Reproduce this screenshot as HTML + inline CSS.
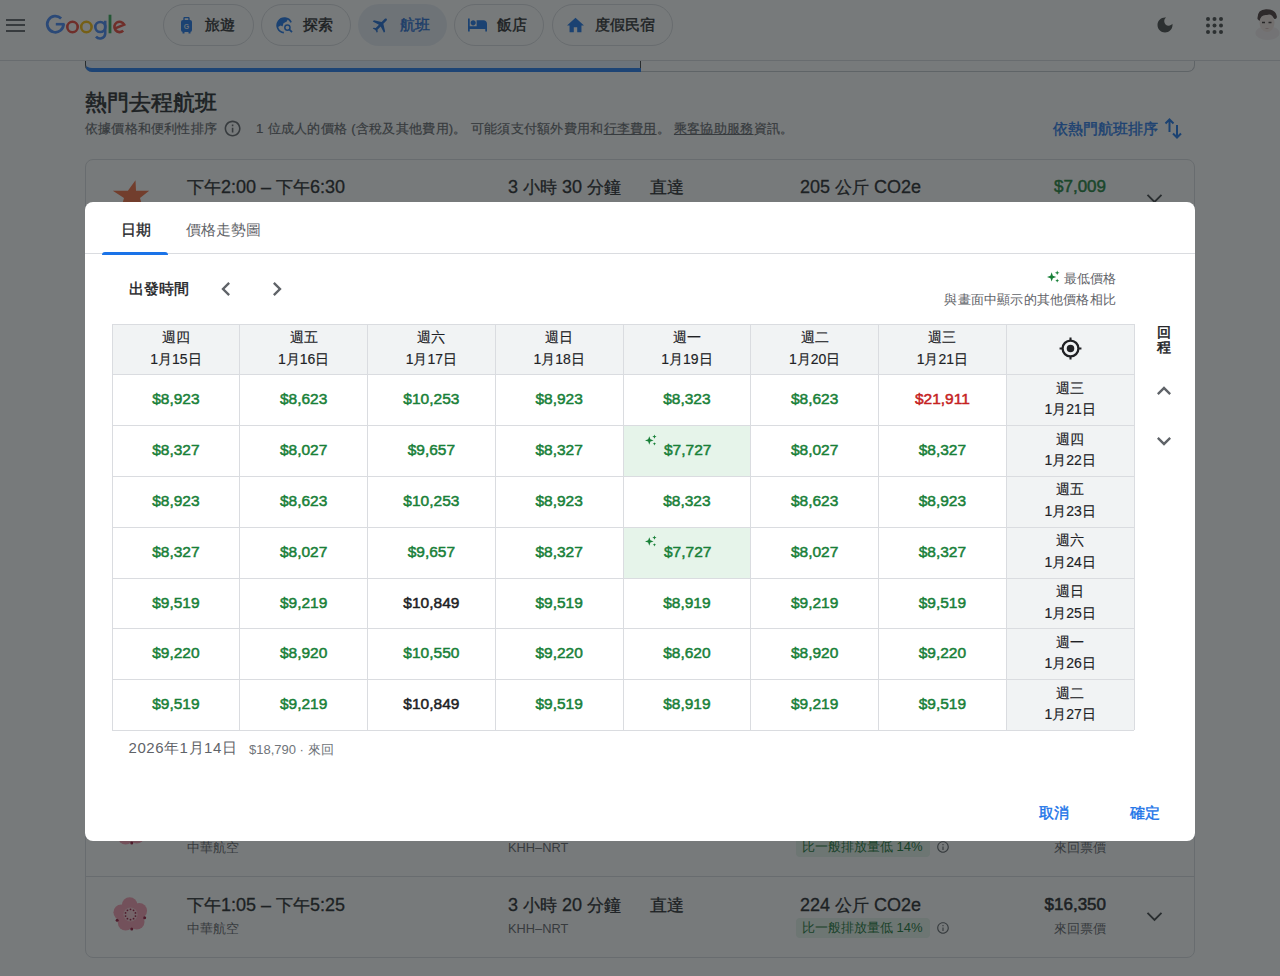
<!DOCTYPE html><html><head><meta charset="utf-8"><style>
*{box-sizing:border-box;margin:0;padding:0}
html,body{width:1280px;height:976px;overflow:hidden;background:#fff}
body{font-family:"Liberation Sans",sans-serif;color:#202124;position:relative}
.a{position:absolute;white-space:nowrap}
svg{display:block}
.m3{-webkit-text-stroke:0.3px currentColor}
.m4{-webkit-text-stroke:0.4px currentColor}
.m5{-webkit-text-stroke:0.5px currentColor}
.m6{-webkit-text-stroke:0.6px currentColor}
.r{text-align:right}
.c{text-align:center}
</style></head><body><div class="a" style="left:85px;top:30px;width:1110px;height:42px;border:1px solid #c4c7cc;border-top:none;border-radius:0 0 7px 7px;background:#fff"></div>
<div class="a" style="left:85px;top:30px;width:556px;height:42px;border-radius:0 0 0 7px;background:#e6f0ff;border-bottom:4px solid #1f78f0;border-left:1px solid #3c4043"></div>
<div class="a" style="left:640px;top:30px;width:1px;height:38px;background:#3c4043"></div>
<div class="a" style="left:0;top:0;width:1280px;height:61px;background:#fff;border-bottom:1px solid #dadce0"></div>
<div class="a" style="left:6px;top:18.5px;width:19px;height:2px;background:#5f6368"></div>
<div class="a" style="left:6px;top:24px;width:19px;height:2px;background:#5f6368"></div>
<div class="a" style="left:6px;top:29.5px;width:19px;height:2px;background:#5f6368"></div>
<div class="a" style="left:0;top:0"><svg width="140" height="45" viewBox="0 0 140 45" fill="none"><path d="M61.1 18.4 A8.1 8.1 0 1 0 63.5 24" stroke="#4285f4" stroke-width="2.8"/><path d="M55.8 24.2 H64.6" stroke="#4285f4" stroke-width="2.6"/><circle cx="72.5" cy="27" r="5.2" stroke="#ea4335" stroke-width="2.6"/><circle cx="86.4" cy="27" r="5.2" stroke="#fbbc04" stroke-width="2.6"/><circle cx="100.3" cy="27" r="5" stroke="#4285f4" stroke-width="2.6"/><path d="M105.2 20.7 V33.8 A5.2 5.2 0 0 1 96 36.6" stroke="#4285f4" stroke-width="2.6"/><path d="M110 14.7 V33.3" stroke="#34a853" stroke-width="2.8"/><path d="M114.6 28.6 L124.2 24.6 A5.2 5.2 0 1 0 123.2 30.6" stroke="#ea4335" stroke-width="2.6"/></svg></div>
<div class="a" style="left:163px;top:4px;width:91px;height:42px;border-radius:21px;border:1px solid #dadce0"></div>
<div class="a" style="left:181px;top:16.5px"><svg width="11" height="17" viewBox="0 0 11 17"><rect x="3" y="0.6" width="5" height="3" rx="0.8" fill="none" stroke="#1a73e8" stroke-width="1.4"/><rect x="0" y="3" width="11" height="12" rx="2" fill="#1a73e8"/><rect x="1.5" y="14.5" width="2" height="2" fill="#1a73e8"/><rect x="7.5" y="14.5" width="2" height="2" fill="#1a73e8"/><text x="5.5" y="12" font-size="7" font-weight="bold" text-anchor="middle" fill="#dfe8f8" font-family="Liberation Sans">G</text></svg></div>
<div class="a m4" style="left:205px;top:16px;font-size:15px;line-height:18px;color:#202124">旅遊</div>
<div class="a" style="left:261px;top:4px;width:90px;height:42px;border-radius:21px;border:1px solid #dadce0"></div>
<div class="a" style="left:276px;top:16.5px"><svg width="17" height="17" viewBox="0 0 17 17" fill="none"><path d="M15.1 5.3 A7.3 7.3 0 1 0 7.86 15.67" stroke="#1a73e8" stroke-width="1.7"/><path fill="#1a73e8" d="M1.5 7 Q3 2 8.5 1.1 L12 1.8 L10.8 4.5 L7.5 6.3 L6.5 9.5 L4.8 8.5 L2 10Z"/><circle cx="11.4" cy="10.6" r="2.6" stroke="#1a73e8" stroke-width="1.5"/><path d="M13.2 12.4 L16 15.2" stroke="#1a73e8" stroke-width="1.8"/></svg></div>
<div class="a m4" style="left:303px;top:16px;font-size:15px;line-height:18px;color:#202124">探索</div>
<div class="a" style="left:358px;top:4px;width:89px;height:42px;border-radius:21px;background:#e9eef6"></div>
<div class="a" style="left:371px;top:15px"><svg width="20" height="20" viewBox="0 0 24 24"><g transform="rotate(45 12 12)"><path fill="#1967d2" d="M21 16v-2l-8-5V3.5c0-.83-.67-1.5-1.5-1.5S10 2.67 10 3.5V9l-8 5v2l8-2.5V19l-2 1.5V22l3.5-1 3.5 1v-1.5L13 19v-5.5l8 2.5z"/></g></svg></div>
<div class="a m4" style="left:400px;top:16px;font-size:15px;line-height:18px;color:#1967d2">航班</div>
<div class="a" style="left:454px;top:4px;width:90px;height:42px;border-radius:21px;border:1px solid #dadce0"></div>
<div class="a" style="left:468px;top:18px"><svg width="19" height="14" viewBox="1 5 22 15"><path fill="#1a73e8" d="M7 13c1.66 0 3-1.34 3-3S8.66 7 7 7s-3 1.34-3 3 1.34 3 3 3zm12-6h-8v7H3V5H1v15h2v-3h18v3h2v-9c0-2.21-1.79-4-4-4z"/></svg></div>
<div class="a m4" style="left:497px;top:16px;font-size:15px;line-height:18px;color:#202124">飯店</div>
<div class="a" style="left:552px;top:4px;width:121px;height:42px;border-radius:21px;border:1px solid #dadce0"></div>
<div class="a" style="left:567px;top:17px"><svg width="17" height="16" viewBox="2 3 20 17"><path fill="#1a73e8" d="M10 20v-6h4v6h5v-8h3L12 3 2 12h3v8z"/></svg></div>
<div class="a m4" style="left:595px;top:16px;font-size:15px;line-height:18px;color:#202124">度假民宿</div>
<div class="a" style="left:1155px;top:15px"><svg width="20" height="20" viewBox="0 0 24 24"><path fill="#444746" d="M12 3c-4.97 0-9 4.03-9 9s4.03 9 9 9 9-4.03 9-9c0-.46-.04-.92-.1-1.36-.98 1.37-2.58 2.26-4.4 2.26-2.98 0-5.4-2.42-5.4-5.4 0-1.81.89-3.42 2.26-4.4-.44-.06-.9-.1-1.36-.1z"/></svg></div>
<div class="a" style="left:1206px;top:16.5px"><svg width="18" height="18" viewBox="0 0 18 18"><circle cx="2.0" cy="2.0" r="2" fill="#444746"/><circle cx="2.0" cy="8.5" r="2" fill="#444746"/><circle cx="2.0" cy="15.0" r="2" fill="#444746"/><circle cx="8.5" cy="2.0" r="2" fill="#444746"/><circle cx="8.5" cy="8.5" r="2" fill="#444746"/><circle cx="8.5" cy="15.0" r="2" fill="#444746"/><circle cx="15.0" cy="2.0" r="2" fill="#444746"/><circle cx="15.0" cy="8.5" r="2" fill="#444746"/><circle cx="15.0" cy="15.0" r="2" fill="#444746"/></svg></div>
<div class="a" style="left:1245px;top:0"><svg width="35" height="50" viewBox="0 0 35 50"><ellipse cx="22.5" cy="33" rx="12" ry="7" fill="#f4eef0"/><ellipse cx="22" cy="23" rx="7.5" ry="9" fill="#f3e3de"/><path d="M12.5 19 Q12 9.5 21 9.2 Q31 9 32 17 Q31 20 29 18.5 Q26 13 22 15 Q16 14 14.5 21Z" fill="#4a3838"/><path d="M17 22.5 h3 M23.5 22.5 h3" stroke="#3a3030" stroke-width="1.3"/><path d="M20.5 28.5 h3" stroke="#c9a8a8" stroke-width="0.8"/></svg></div>
<div class="a m6" style="left:85px;top:90px;font-size:21.6px;line-height:26px;color:#202124">熱門去程航班</div>
<div class="a" style="left:85px;top:121px;font-size:13px;line-height:16px;color:#5f6368;letter-spacing:0.2px;-webkit-text-stroke:0.2px #5f6368">依據價格和便利性排序</div>
<div class="a" style="left:223.2px;top:119.4px"><svg width="19.2" height="19.2" viewBox="0 0 24 24" fill="#5f6368"><path d="M11 7h2v2h-2zm0 4h2v6h-2zm1-9C6.48 2 2 6.48 2 12s4.48 10 10 10 10-4.48 10-10S17.52 2 12 2zm0 18c-4.41 0-8-3.59-8-8s3.59-8 8-8 8 3.59 8 8-3.59 8-8 8z"/></svg></div>
<div class="a" style="left:256px;top:121px;font-size:13.2px;line-height:16px;color:#5f6368;letter-spacing:0.28px;-webkit-text-stroke:0.2px #5f6368">1 位成人的價格 (含稅及其他費用)。 可能須支付額外費用和<u>行李費用</u>。 <u>乘客協助服務</u>資訊。</div>
<div class="a m4" style="left:1053px;top:119.5px;font-size:15px;line-height:18px;color:#1a73e8">依熱門航班排序</div>
<div class="a" style="left:1164px;top:117px"><svg width="19" height="23" viewBox="0 0 19 23" fill="none" stroke="#1a73e8" stroke-width="2"><path d="M5.5 15 V2.5 M1.5 6.5 L5.5 2.5 L9.5 6.5"/><path d="M13 8 V20.5 M9 16.5 L13 20.5 L17 16.5"/></svg></div>
<div class="a" style="left:85px;top:159px;width:1110px;height:799px;border:1px solid #dadce0;border-radius:8px;background:#fff"></div>
<div class="a" style="left:86px;top:876px;width:1108px;height:1px;background:#dadce0"></div>
<div class="a" style="left:86px;top:795px;width:1108px;height:1px;background:#dadce0"></div>
<div class="a" style="left:111px;top:178px"><svg width="40" height="40" viewBox="0 0 40 40"><path fill="#f26a3c" d="M24.5 2.3 L25 12.7 L38.2 12.7 L29 20 L33 34 L21 26 L9 34 L13 20 L1.8 12.7 L16.9 12.7Z"/></svg></div>
<div class="a m3" style="left:187px;top:176.8px;font-size:18px;line-height:20px;color:#202124"><span style="font-size:17px">下午</span>2:00 – <span style="font-size:17px">下午</span>6:30</div>
<div class="a m3" style="left:508px;top:176.8px;font-size:18px;line-height:20px;color:#202124">3 <span style="font-size:17px">小時</span> 30 <span style="font-size:17px">分鐘</span></div>
<div class="a m3" style="left:650px;top:176.8px;font-size:18px;line-height:20px;color:#202124"><span style="font-size:17px">直達</span></div>
<div class="a m3" style="left:800px;top:176.8px;font-size:18px;line-height:20px;color:#202124">205 <span style="font-size:17px">公斤</span> CO2e</div>
<div class="a r" style="left:1000px;width:106px;top:177px;font-size:17px;line-height:20px;-webkit-text-stroke:0.5px #188038;color:#188038">$7,009</div>
<div class="a" style="left:1146px;top:193px"><svg width="17" height="11" viewBox="0 0 17 11" fill="none" stroke="#3c4043" stroke-width="1.9"><path d="M1.5 1.8 L8.5 8.8 L15.5 1.8"/></svg></div>
<div class="a" style="left:111px;top:811px"><svg width="40" height="36" viewBox="0 0 40 36"><g fill="#f59aae"><circle cx="18.67" cy="8.04" r="7.8"/><circle cx="28.24" cy="13.79" r="7.8"/><circle cx="25.73" cy="24.67" r="7.8"/><circle cx="14.61" cy="25.64" r="7.8"/><circle cx="10.24" cy="15.36" r="7.8"/></g><circle cx="19.5" cy="17.5" r="7" fill="#fbc8d2"/><circle cx="19.50" cy="12.30" r="0.9" fill="#9a1238"/><circle cx="22.56" cy="13.29" r="0.9" fill="#9a1238"/><circle cx="24.45" cy="15.89" r="0.9" fill="#9a1238"/><circle cx="24.45" cy="19.11" r="0.9" fill="#9a1238"/><circle cx="22.56" cy="21.71" r="0.9" fill="#9a1238"/><circle cx="19.50" cy="22.70" r="0.9" fill="#9a1238"/><circle cx="16.44" cy="21.71" r="0.9" fill="#9a1238"/><circle cx="14.55" cy="19.11" r="0.9" fill="#9a1238"/><circle cx="14.55" cy="15.89" r="0.9" fill="#9a1238"/><circle cx="16.44" cy="13.29" r="0.9" fill="#9a1238"/><circle cx="33.63" cy="20.76" r="1.5" fill="#9a1238"/><circle cx="20.76" cy="31.94" r="1.5" fill="#9a1238"/><circle cx="6.15" cy="23.17" r="1.5" fill="#9a1238"/></svg></div>
<div class="a" style="left:187px;top:839.5px;font-size:12.8px;line-height:16px;color:#5f6368">中華航空</div>
<div class="a" style="left:508px;top:839.5px;font-size:12.8px;line-height:16px;color:#5f6368">KHH–NRT</div>
<div class="a" style="left:796px;top:837px;width:134px;height:20px;border-radius:4px;background:#e6f4ea"></div>
<div class="a" style="left:802px;top:839px;font-size:13px;line-height:16px;color:#137333">比一般排放量低 14%</div>
<div class="a" style="left:936px;top:840px"><svg width="14" height="14" viewBox="0 0 24 24" fill="#5f6368"><path d="M11 7h2v2h-2zm0 4h2v6h-2zm1-9C6.48 2 2 6.48 2 12s4.48 10 10 10 10-4.48 10-10S17.52 2 12 2zm0 18c-4.41 0-8-3.59-8-8s3.59-8 8-8 8 3.59 8 8-3.59 8-8 8z"/></svg></div>
<div class="a r" style="left:1000px;width:106px;top:839.5px;font-size:12.8px;line-height:16px;color:#5f6368">來回票價</div>
<div class="a" style="left:111px;top:897px"><svg width="40" height="36" viewBox="0 0 40 36"><g fill="#f59aae"><circle cx="18.67" cy="8.04" r="7.8"/><circle cx="28.24" cy="13.79" r="7.8"/><circle cx="25.73" cy="24.67" r="7.8"/><circle cx="14.61" cy="25.64" r="7.8"/><circle cx="10.24" cy="15.36" r="7.8"/></g><circle cx="19.5" cy="17.5" r="7" fill="#fbc8d2"/><circle cx="19.50" cy="12.30" r="0.9" fill="#9a1238"/><circle cx="22.56" cy="13.29" r="0.9" fill="#9a1238"/><circle cx="24.45" cy="15.89" r="0.9" fill="#9a1238"/><circle cx="24.45" cy="19.11" r="0.9" fill="#9a1238"/><circle cx="22.56" cy="21.71" r="0.9" fill="#9a1238"/><circle cx="19.50" cy="22.70" r="0.9" fill="#9a1238"/><circle cx="16.44" cy="21.71" r="0.9" fill="#9a1238"/><circle cx="14.55" cy="19.11" r="0.9" fill="#9a1238"/><circle cx="14.55" cy="15.89" r="0.9" fill="#9a1238"/><circle cx="16.44" cy="13.29" r="0.9" fill="#9a1238"/><circle cx="33.63" cy="20.76" r="1.5" fill="#9a1238"/><circle cx="20.76" cy="31.94" r="1.5" fill="#9a1238"/><circle cx="6.15" cy="23.17" r="1.5" fill="#9a1238"/></svg></div>
<div class="a m3" style="left:187px;top:894.8px;font-size:18px;line-height:20px;color:#202124"><span style="font-size:17px">下午</span>1:05 – <span style="font-size:17px">下午</span>5:25</div>
<div class="a" style="left:187px;top:920.5px;font-size:12.8px;line-height:16px;color:#5f6368">中華航空</div>
<div class="a m3" style="left:508px;top:894.8px;font-size:18px;line-height:20px;color:#202124">3 <span style="font-size:17px">小時</span> 20 <span style="font-size:17px">分鐘</span></div>
<div class="a" style="left:508px;top:920.5px;font-size:12.8px;line-height:16px;color:#5f6368">KHH–NRT</div>
<div class="a m3" style="left:650px;top:894.8px;font-size:18px;line-height:20px;color:#202124"><span style="font-size:17px">直達</span></div>
<div class="a m3" style="left:800px;top:894.8px;font-size:18px;line-height:20px;color:#202124">224 <span style="font-size:17px">公斤</span> CO2e</div>
<div class="a" style="left:796px;top:918px;width:134px;height:20px;border-radius:4px;background:#e6f4ea"></div>
<div class="a" style="left:802px;top:920px;font-size:13px;line-height:16px;color:#137333">比一般排放量低 14%</div>
<div class="a" style="left:936px;top:921px"><svg width="14" height="14" viewBox="0 0 24 24" fill="#5f6368"><path d="M11 7h2v2h-2zm0 4h2v6h-2zm1-9C6.48 2 2 6.48 2 12s4.48 10 10 10 10-4.48 10-10S17.52 2 12 2zm0 18c-4.41 0-8-3.59-8-8s3.59-8 8-8 8 3.59 8 8-3.59 8-8 8z"/></svg></div>
<div class="a r" style="left:1000px;width:106px;top:895px;font-size:17px;line-height:20px;-webkit-text-stroke:0.55px #202124;color:#202124">$16,350</div>
<div class="a r" style="left:1000px;width:106px;top:920.5px;font-size:12.8px;line-height:16px;color:#5f6368">來回票價</div>
<div class="a" style="left:1146px;top:911px"><svg width="17" height="11" viewBox="0 0 17 11" fill="none" stroke="#3c4043" stroke-width="1.9"><path d="M1.5 1.8 L8.5 8.8 L15.5 1.8"/></svg></div>
<div class="a" style="left:0;top:0;width:1280px;height:976px;background:rgba(28,33,35,0.6)"></div>
<div class="a" style="left:85px;top:202px;width:1110px;height:639px;background:#fff;border-radius:8px;overflow:hidden"><div class="a m3" style="left:36px;top:18.5px;font-size:15px;line-height:18px;color:#202124">日期</div><div class="a" style="left:101px;top:18.5px;font-size:15px;line-height:18px;color:#5f6368">價格走勢圖</div><div class="a" style="left:0;top:51px;width:1110px;height:1px;background:#dadce0"></div><div class="a" style="left:17px;top:50px;width:66px;height:3px;border-radius:3px 3px 0 0;background:#1a73e8"></div><div class="a m4" style="left:44px;top:78px;font-size:15px;line-height:18px;color:#202124">出發時間</div><div class="a" style="left:126.5px;top:72.5px"><svg width="28" height="28" viewBox="0 0 24 24"><path fill="#5f6368" d="M15.41 7.41L14 6l-6 6 6 6 1.41-1.41L10.83 12z"/></svg></div><div class="a" style="left:178px;top:72.5px"><svg width="28" height="28" viewBox="0 0 24 24"><path fill="#5f6368" d="M10 6L8.59 7.41 13.17 12l-4.58 4.59L10 18l6-6z"/></svg></div><div class="a" style="left:962px;top:68px"><svg width="13" height="13" viewBox="0 0 14 14"><path fill="#188038" d="M5 2.5 L6.3 6.2 L10 7.5 L6.3 8.8 L5 12.5 L3.7 8.8 L0 7.5 L3.7 6.2Z M11 0.5 L11.7 2.3 L13.5 3 L11.7 3.7 L11 5.5 L10.3 3.7 L8.5 3 L10.3 2.3Z M11 9.5 L11.6 10.9 L13 11.5 L11.6 12.1 L11 13.5 L10.4 12.1 L9 11.5 L10.4 10.9Z"/></svg></div><div class="a r" style="left:831px;width:200px;top:68.5px;font-size:13.2px;line-height:16px;color:#5f6368">最低價格</div><div class="a r" style="left:731px;width:300px;top:89.5px;font-size:13.4px;line-height:16px;color:#5f6368;letter-spacing:0.2px">與畫面中顯示的其他價格相比</div><div class="a" style="left:27.0px;top:122.0px;width:1022.0px;height:50.8px;background:#f1f3f4"></div><div class="a" style="left:921.25px;top:122.0px;width:127.75px;height:406.4px;background:#f1f3f4"></div><div class="a" style="left:538.0px;top:223.6px;width:127.75px;height:50.8px;background:#e6f4ea"></div><div class="a" style="left:538.0px;top:325.2px;width:127.75px;height:50.8px;background:#e6f4ea"></div><div class="a" style="left:26.5px;top:122.0px;width:1px;height:406.4px;background:#dadce0"></div><div class="a" style="left:154.25px;top:122.0px;width:1px;height:406.4px;background:#dadce0"></div><div class="a" style="left:282.0px;top:122.0px;width:1px;height:406.4px;background:#dadce0"></div><div class="a" style="left:409.75px;top:122.0px;width:1px;height:406.4px;background:#dadce0"></div><div class="a" style="left:537.5px;top:122.0px;width:1px;height:406.4px;background:#dadce0"></div><div class="a" style="left:665.25px;top:122.0px;width:1px;height:406.4px;background:#dadce0"></div><div class="a" style="left:793.0px;top:122.0px;width:1px;height:406.4px;background:#dadce0"></div><div class="a" style="left:920.75px;top:122.0px;width:1px;height:406.4px;background:#dadce0"></div><div class="a" style="left:1048.5px;top:122.0px;width:1px;height:406.4px;background:#dadce0"></div><div class="a" style="left:27.0px;top:121.5px;width:1022.0px;height:1px;background:#dadce0"></div><div class="a" style="left:27.0px;top:172.3px;width:1022.0px;height:1px;background:#dadce0"></div><div class="a" style="left:27.0px;top:223.1px;width:1022.0px;height:1px;background:#dadce0"></div><div class="a" style="left:27.0px;top:273.9px;width:1022.0px;height:1px;background:#dadce0"></div><div class="a" style="left:27.0px;top:324.7px;width:1022.0px;height:1px;background:#dadce0"></div><div class="a" style="left:27.0px;top:375.5px;width:1022.0px;height:1px;background:#dadce0"></div><div class="a" style="left:27.0px;top:426.29999999999995px;width:1022.0px;height:1px;background:#dadce0"></div><div class="a" style="left:27.0px;top:477.09999999999997px;width:1022.0px;height:1px;background:#dadce0"></div><div class="a" style="left:27.0px;top:527.9px;width:1022.0px;height:1px;background:#dadce0"></div><div class="a c" style="left:27.0px;top:125.0px;width:127.75px;font-size:14px;line-height:21.5px;color:#202124;-webkit-text-stroke:0.15px #202124">週四<br>1月15日</div><div class="a c" style="left:154.75px;top:125.0px;width:127.75px;font-size:14px;line-height:21.5px;color:#202124;-webkit-text-stroke:0.15px #202124">週五<br>1月16日</div><div class="a c" style="left:282.5px;top:125.0px;width:127.75px;font-size:14px;line-height:21.5px;color:#202124;-webkit-text-stroke:0.15px #202124">週六<br>1月17日</div><div class="a c" style="left:410.25px;top:125.0px;width:127.75px;font-size:14px;line-height:21.5px;color:#202124;-webkit-text-stroke:0.15px #202124">週日<br>1月18日</div><div class="a c" style="left:538.0px;top:125.0px;width:127.75px;font-size:14px;line-height:21.5px;color:#202124;-webkit-text-stroke:0.15px #202124">週一<br>1月19日</div><div class="a c" style="left:665.75px;top:125.0px;width:127.75px;font-size:14px;line-height:21.5px;color:#202124;-webkit-text-stroke:0.15px #202124">週二<br>1月20日</div><div class="a c" style="left:793.5px;top:125.0px;width:127.75px;font-size:14px;line-height:21.5px;color:#202124;-webkit-text-stroke:0.15px #202124">週三<br>1月21日</div><div class="a" style="left:972.625px;top:134.4px"><svg width="25" height="25" viewBox="0 0 24 24" fill="none" stroke="#202124"><circle cx="12" cy="12" r="7.6" stroke-width="2.2"/><circle cx="12" cy="12" r="3.6" fill="#202124" stroke="none"/><path d="M12 1.5V4.5M12 19.5V22.5M1.5 12H4.5M19.5 12H22.5" stroke-width="2"/></svg></div><div class="a c" style="left:921.25px;top:175.8px;width:127.75px;font-size:14px;line-height:21.5px;color:#202124;-webkit-text-stroke:0.15px #202124">週三<br>1月21日</div><div class="a c" style="left:921.25px;top:226.6px;width:127.75px;font-size:14px;line-height:21.5px;color:#202124;-webkit-text-stroke:0.15px #202124">週四<br>1月22日</div><div class="a c" style="left:921.25px;top:277.4px;width:127.75px;font-size:14px;line-height:21.5px;color:#202124;-webkit-text-stroke:0.15px #202124">週五<br>1月23日</div><div class="a c" style="left:921.25px;top:328.2px;width:127.75px;font-size:14px;line-height:21.5px;color:#202124;-webkit-text-stroke:0.15px #202124">週六<br>1月24日</div><div class="a c" style="left:921.25px;top:379.0px;width:127.75px;font-size:14px;line-height:21.5px;color:#202124;-webkit-text-stroke:0.15px #202124">週日<br>1月25日</div><div class="a c" style="left:921.25px;top:429.79999999999995px;width:127.75px;font-size:14px;line-height:21.5px;color:#202124;-webkit-text-stroke:0.15px #202124">週一<br>1月26日</div><div class="a c" style="left:921.25px;top:480.59999999999997px;width:127.75px;font-size:14px;line-height:21.5px;color:#202124;-webkit-text-stroke:0.15px #202124">週二<br>1月27日</div><div class="a c" style="left:27.0px;top:188.3px;width:127.75px;font-size:15.5px;line-height:18px;-webkit-text-stroke:0.5px #188038;color:#188038">$8,923</div><div class="a c" style="left:154.75px;top:188.3px;width:127.75px;font-size:15.5px;line-height:18px;-webkit-text-stroke:0.5px #188038;color:#188038">$8,623</div><div class="a c" style="left:282.5px;top:188.3px;width:127.75px;font-size:15.5px;line-height:18px;-webkit-text-stroke:0.5px #188038;color:#188038">$10,253</div><div class="a c" style="left:410.25px;top:188.3px;width:127.75px;font-size:15.5px;line-height:18px;-webkit-text-stroke:0.5px #188038;color:#188038">$8,923</div><div class="a c" style="left:538.0px;top:188.3px;width:127.75px;font-size:15.5px;line-height:18px;-webkit-text-stroke:0.5px #188038;color:#188038">$8,323</div><div class="a c" style="left:665.75px;top:188.3px;width:127.75px;font-size:15.5px;line-height:18px;-webkit-text-stroke:0.5px #188038;color:#188038">$8,623</div><div class="a c" style="left:793.5px;top:188.3px;width:127.75px;font-size:15.5px;line-height:18px;-webkit-text-stroke:0.5px #c5221f;color:#c5221f">$21,911</div><div class="a c" style="left:27.0px;top:239.1px;width:127.75px;font-size:15.5px;line-height:18px;-webkit-text-stroke:0.5px #188038;color:#188038">$8,327</div><div class="a c" style="left:154.75px;top:239.1px;width:127.75px;font-size:15.5px;line-height:18px;-webkit-text-stroke:0.5px #188038;color:#188038">$8,027</div><div class="a c" style="left:282.5px;top:239.1px;width:127.75px;font-size:15.5px;line-height:18px;-webkit-text-stroke:0.5px #188038;color:#188038">$9,657</div><div class="a c" style="left:410.25px;top:239.1px;width:127.75px;font-size:15.5px;line-height:18px;-webkit-text-stroke:0.5px #188038;color:#188038">$8,327</div><div class="a" style="left:560.0px;top:231.6px"><svg width="12" height="12" viewBox="0 0 14 14"><path fill="#188038" d="M5 2.5 L6.3 6.2 L10 7.5 L6.3 8.8 L5 12.5 L3.7 8.8 L0 7.5 L3.7 6.2Z M11 0.5 L11.7 2.3 L13.5 3 L11.7 3.7 L11 5.5 L10.3 3.7 L8.5 3 L10.3 2.3Z M11 9.5 L11.6 10.9 L13 11.5 L11.6 12.1 L11 13.5 L10.4 12.1 L9 11.5 L10.4 10.9Z"/></svg></div><div class="a" style="left:579.0px;top:239.1px;font-size:15.5px;line-height:18px;-webkit-text-stroke:0.5px #188038;color:#188038">$7,727</div><div class="a c" style="left:665.75px;top:239.1px;width:127.75px;font-size:15.5px;line-height:18px;-webkit-text-stroke:0.5px #188038;color:#188038">$8,027</div><div class="a c" style="left:793.5px;top:239.1px;width:127.75px;font-size:15.5px;line-height:18px;-webkit-text-stroke:0.5px #188038;color:#188038">$8,327</div><div class="a c" style="left:27.0px;top:289.9px;width:127.75px;font-size:15.5px;line-height:18px;-webkit-text-stroke:0.5px #188038;color:#188038">$8,923</div><div class="a c" style="left:154.75px;top:289.9px;width:127.75px;font-size:15.5px;line-height:18px;-webkit-text-stroke:0.5px #188038;color:#188038">$8,623</div><div class="a c" style="left:282.5px;top:289.9px;width:127.75px;font-size:15.5px;line-height:18px;-webkit-text-stroke:0.5px #188038;color:#188038">$10,253</div><div class="a c" style="left:410.25px;top:289.9px;width:127.75px;font-size:15.5px;line-height:18px;-webkit-text-stroke:0.5px #188038;color:#188038">$8,923</div><div class="a c" style="left:538.0px;top:289.9px;width:127.75px;font-size:15.5px;line-height:18px;-webkit-text-stroke:0.5px #188038;color:#188038">$8,323</div><div class="a c" style="left:665.75px;top:289.9px;width:127.75px;font-size:15.5px;line-height:18px;-webkit-text-stroke:0.5px #188038;color:#188038">$8,623</div><div class="a c" style="left:793.5px;top:289.9px;width:127.75px;font-size:15.5px;line-height:18px;-webkit-text-stroke:0.5px #188038;color:#188038">$8,923</div><div class="a c" style="left:27.0px;top:340.7px;width:127.75px;font-size:15.5px;line-height:18px;-webkit-text-stroke:0.5px #188038;color:#188038">$8,327</div><div class="a c" style="left:154.75px;top:340.7px;width:127.75px;font-size:15.5px;line-height:18px;-webkit-text-stroke:0.5px #188038;color:#188038">$8,027</div><div class="a c" style="left:282.5px;top:340.7px;width:127.75px;font-size:15.5px;line-height:18px;-webkit-text-stroke:0.5px #188038;color:#188038">$9,657</div><div class="a c" style="left:410.25px;top:340.7px;width:127.75px;font-size:15.5px;line-height:18px;-webkit-text-stroke:0.5px #188038;color:#188038">$8,327</div><div class="a" style="left:560.0px;top:333.2px"><svg width="12" height="12" viewBox="0 0 14 14"><path fill="#188038" d="M5 2.5 L6.3 6.2 L10 7.5 L6.3 8.8 L5 12.5 L3.7 8.8 L0 7.5 L3.7 6.2Z M11 0.5 L11.7 2.3 L13.5 3 L11.7 3.7 L11 5.5 L10.3 3.7 L8.5 3 L10.3 2.3Z M11 9.5 L11.6 10.9 L13 11.5 L11.6 12.1 L11 13.5 L10.4 12.1 L9 11.5 L10.4 10.9Z"/></svg></div><div class="a" style="left:579.0px;top:340.7px;font-size:15.5px;line-height:18px;-webkit-text-stroke:0.5px #188038;color:#188038">$7,727</div><div class="a c" style="left:665.75px;top:340.7px;width:127.75px;font-size:15.5px;line-height:18px;-webkit-text-stroke:0.5px #188038;color:#188038">$8,027</div><div class="a c" style="left:793.5px;top:340.7px;width:127.75px;font-size:15.5px;line-height:18px;-webkit-text-stroke:0.5px #188038;color:#188038">$8,327</div><div class="a c" style="left:27.0px;top:391.5px;width:127.75px;font-size:15.5px;line-height:18px;-webkit-text-stroke:0.5px #188038;color:#188038">$9,519</div><div class="a c" style="left:154.75px;top:391.5px;width:127.75px;font-size:15.5px;line-height:18px;-webkit-text-stroke:0.5px #188038;color:#188038">$9,219</div><div class="a c" style="left:282.5px;top:391.5px;width:127.75px;font-size:15.5px;line-height:18px;-webkit-text-stroke:0.5px #202124;color:#202124">$10,849</div><div class="a c" style="left:410.25px;top:391.5px;width:127.75px;font-size:15.5px;line-height:18px;-webkit-text-stroke:0.5px #188038;color:#188038">$9,519</div><div class="a c" style="left:538.0px;top:391.5px;width:127.75px;font-size:15.5px;line-height:18px;-webkit-text-stroke:0.5px #188038;color:#188038">$8,919</div><div class="a c" style="left:665.75px;top:391.5px;width:127.75px;font-size:15.5px;line-height:18px;-webkit-text-stroke:0.5px #188038;color:#188038">$9,219</div><div class="a c" style="left:793.5px;top:391.5px;width:127.75px;font-size:15.5px;line-height:18px;-webkit-text-stroke:0.5px #188038;color:#188038">$9,519</div><div class="a c" style="left:27.0px;top:442.29999999999995px;width:127.75px;font-size:15.5px;line-height:18px;-webkit-text-stroke:0.5px #188038;color:#188038">$9,220</div><div class="a c" style="left:154.75px;top:442.29999999999995px;width:127.75px;font-size:15.5px;line-height:18px;-webkit-text-stroke:0.5px #188038;color:#188038">$8,920</div><div class="a c" style="left:282.5px;top:442.29999999999995px;width:127.75px;font-size:15.5px;line-height:18px;-webkit-text-stroke:0.5px #188038;color:#188038">$10,550</div><div class="a c" style="left:410.25px;top:442.29999999999995px;width:127.75px;font-size:15.5px;line-height:18px;-webkit-text-stroke:0.5px #188038;color:#188038">$9,220</div><div class="a c" style="left:538.0px;top:442.29999999999995px;width:127.75px;font-size:15.5px;line-height:18px;-webkit-text-stroke:0.5px #188038;color:#188038">$8,620</div><div class="a c" style="left:665.75px;top:442.29999999999995px;width:127.75px;font-size:15.5px;line-height:18px;-webkit-text-stroke:0.5px #188038;color:#188038">$8,920</div><div class="a c" style="left:793.5px;top:442.29999999999995px;width:127.75px;font-size:15.5px;line-height:18px;-webkit-text-stroke:0.5px #188038;color:#188038">$9,220</div><div class="a c" style="left:27.0px;top:493.09999999999997px;width:127.75px;font-size:15.5px;line-height:18px;-webkit-text-stroke:0.5px #188038;color:#188038">$9,519</div><div class="a c" style="left:154.75px;top:493.09999999999997px;width:127.75px;font-size:15.5px;line-height:18px;-webkit-text-stroke:0.5px #188038;color:#188038">$9,219</div><div class="a c" style="left:282.5px;top:493.09999999999997px;width:127.75px;font-size:15.5px;line-height:18px;-webkit-text-stroke:0.5px #202124;color:#202124">$10,849</div><div class="a c" style="left:410.25px;top:493.09999999999997px;width:127.75px;font-size:15.5px;line-height:18px;-webkit-text-stroke:0.5px #188038;color:#188038">$9,519</div><div class="a c" style="left:538.0px;top:493.09999999999997px;width:127.75px;font-size:15.5px;line-height:18px;-webkit-text-stroke:0.5px #188038;color:#188038">$8,919</div><div class="a c" style="left:665.75px;top:493.09999999999997px;width:127.75px;font-size:15.5px;line-height:18px;-webkit-text-stroke:0.5px #188038;color:#188038">$9,219</div><div class="a c" style="left:793.5px;top:493.09999999999997px;width:127.75px;font-size:15.5px;line-height:18px;-webkit-text-stroke:0.5px #188038;color:#188038">$9,519</div><div class="a m5" style="left:1072px;top:123px;font-size:14px;line-height:14.5px;color:#202124;white-space:normal;width:16px">回<br>程</div><div class="a" style="left:1065px;top:174.5px"><svg width="28" height="28" viewBox="0 0 24 24"><path fill="#5f6368" d="M12 8l-6 6 1.41 1.41L12 10.83l4.59 4.58L18 14z"/></svg></div><div class="a" style="left:1065px;top:225px"><svg width="28" height="28" viewBox="0 0 24 24"><path fill="#5f6368" d="M16.59 8.59L12 13.17 7.41 8.59 6 10l6 6 6-6z"/></svg></div><div class="a" style="left:43.5px;top:537px;font-size:15px;line-height:18px;color:#5f6368;letter-spacing:0.55px">2026年1月14日</div><div class="a" style="left:164px;top:539.5px;font-size:13px;line-height:16px;color:#70757a">$18,790 · 來回</div><div class="a m4" style="left:954px;top:601.5px;font-size:14.5px;line-height:18px;color:#1a73e8">取消</div><div class="a m4" style="left:1045px;top:601.5px;font-size:14.5px;line-height:18px;color:#1a73e8">確定</div></div></body></html>
